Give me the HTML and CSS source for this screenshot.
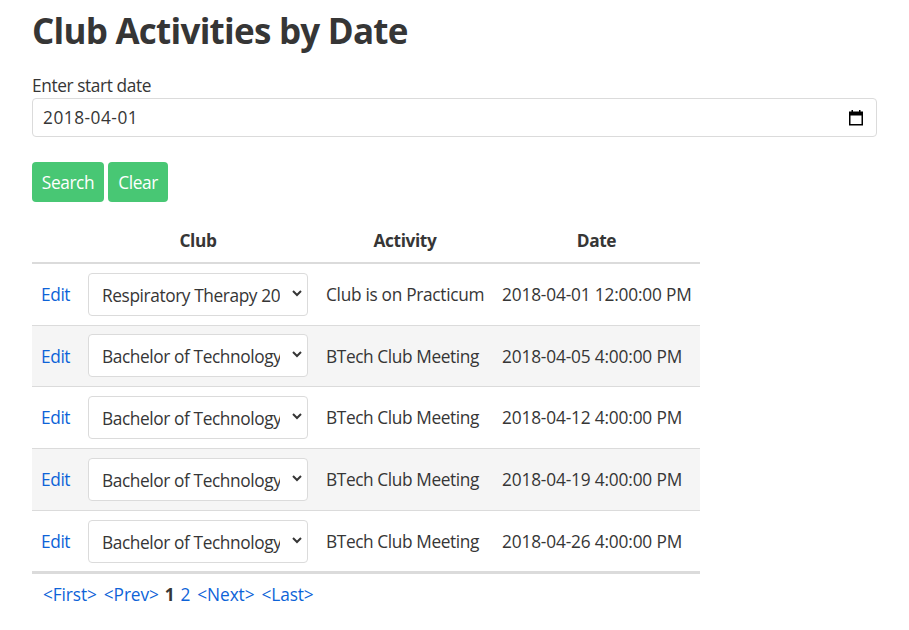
FILE: index.html
```html
<!DOCTYPE html>
<html lang="en">
<head>
<meta charset="utf-8">
<title>Club Activities by Date</title>
<link rel="stylesheet" href="styles.css">
</head>
<body>
<main>
<h1><span>Club Activities by Date</span></h1>
<label class="label"><span>Enter start date</span></label>
<div class="input"><span>2018-04-01</span>
<svg width="16" height="16" viewBox="0 0 16 16"><path d="M3.500 0h1.500v1.500h6V0h1.500v1.500H15V15.500H1V1.500h2.500zM2.500 5.500V14h11V5.500z" fill="#000" fill-rule="evenodd"/></svg></div>
<div class="buttons"><button class="search"><span>Search</span></button><button class="clear"><span>Clear</span></button></div>
<table>
<colgroup><col class="c1"><col class="c2"><col class="c3"><col class="c4"></colgroup>
<thead><tr><th></th><th><span>Club</span></th><th><span>Activity</span></th><th><span>Date</span></th></tr></thead>
<tbody>
<tr><td><a>Edit</a></td><td><div class="select"><div class="value"><span>Respiratory Therapy 20</span></div><svg width="10" height="7" viewBox="0 0 10 7"><path d="M1 1l4 4 4-4"/></svg></div></td><td><span class="practicum">Club is on Practicum</span></td><td class="date">2018-04-01 12:00:00 PM</td></tr>
<tr class="short"><td><a>Edit</a></td><td><div class="select"><div class="value"><span>Bachelor of Technology</span></div><svg width="10" height="7" viewBox="0 0 10 7"><path d="M1 1l4 4 4-4"/></svg></div></td><td>BTech Club Meeting</td><td class="date">2018-04-05 4:00:00 PM</td></tr>
<tr><td><a>Edit</a></td><td><div class="select"><div class="value"><span>Bachelor of Technology</span></div><svg width="10" height="7" viewBox="0 0 10 7"><path d="M1 1l4 4 4-4"/></svg></div></td><td>BTech Club Meeting</td><td class="date">2018-04-12 4:00:00 PM</td></tr>
<tr><td><a>Edit</a></td><td><div class="select"><div class="value"><span>Bachelor of Technology</span></div><svg width="10" height="7" viewBox="0 0 10 7"><path d="M1 1l4 4 4-4"/></svg></div></td><td>BTech Club Meeting</td><td class="date">2018-04-19 4:00:00 PM</td></tr>
<tr class="last"><td><a>Edit</a></td><td><div class="select"><div class="value"><span>Bachelor of Technology</span></div><svg width="10" height="7" viewBox="0 0 10 7"><path d="M1 1l4 4 4-4"/></svg></div></td><td>BTech Club Meeting</td><td class="date">2018-04-26 4:00:00 PM</td></tr>
</tbody>
</table>
<nav><a>&lt;First&gt;</a><a>&lt;Prev&gt;</a><b>1</b><a>2</a><a>&lt;Next&gt;</a><a>&lt;Last&gt;</a></nav>
</main>
</body>
</html>
```
FILE: styles.css
```css
* { box-sizing: border-box; }
body { margin: 0; background: #fff; color: #363636; font: 400 17.3px/26px "Open Sans", "Noto Sans", sans-serif; letter-spacing: -0.4px; white-space: nowrap; overflow: hidden; }
main { padding: 8px 32px 0; }
h1 { margin: 0; height: 65px; font-size: 35px; line-height: 45px; font-weight: 700; letter-spacing: -0.75px; }
.label { display: block; height: 25px; line-height: 26px; }
.input { display: flex; align-items: center; justify-content: space-between; height: 39px; padding: 0 12px 0 10px; border: 1px solid #dbdbdb; border-radius: 4px; letter-spacing: 0.5px; }
.buttons { display: flex; gap: 4px; margin-top: 25px; }
button { height: 40px; padding: 2px 0 0; border: 0; border-radius: 4px; background: #48c774; color: #fff; font: inherit; letter-spacing: inherit; line-height: 38px; }
.search { width: 72px; }
.clear { width: 60px; }
table { width: 668px; margin-top: 16px; border-collapse: separate; border-spacing: 0; table-layout: fixed; }
.c1 { width: 47px; }
.c2 { width: 238px; }
.c3 { width: 176px; }
.c4 { width: 207px; }
th, td { padding: 0 9px; vertical-align: middle; }
th { height: 48px; padding-top: 2px; border-bottom: 2px solid #dbdbdb; text-align: center; font-weight: 700; }
thead th { height: 46px; }
td { height: 62px; border-bottom: 1px solid #dbdbdb; }
td.date { letter-spacing: -0.17px; }
.practicum { letter-spacing: -0.3px; }
.short td { height: 61px; padding-top: 1px; }
.short td:nth-child(2) { padding-top: 0; padding-bottom: 2px; }
.last td { height: 63px; border-bottom-width: 3px; padding-top: 1px; }
.last td:nth-child(2) { padding-top: 0; }
tbody tr:nth-child(even) { background: #f5f5f5; }
a { color: #0d63d8; }
.select { display: flex; align-items: center; justify-content: space-between; width: 220px; height: 43px; padding: 3px 5px 0 13px; border: 1px solid #dbdbdb; border-radius: 4px; background: #fff; }
.value { width: 178px; overflow: hidden; }
.select svg { margin-top: -5px; }
.select path { fill: none; stroke: #363636; stroke-width: 2; }
nav { display: flex; gap: 7px; padding: 8px 10px 0 11px; letter-spacing: -0.1px; }
nav b { margin: 0 -1px; font-weight: 700; }
```
